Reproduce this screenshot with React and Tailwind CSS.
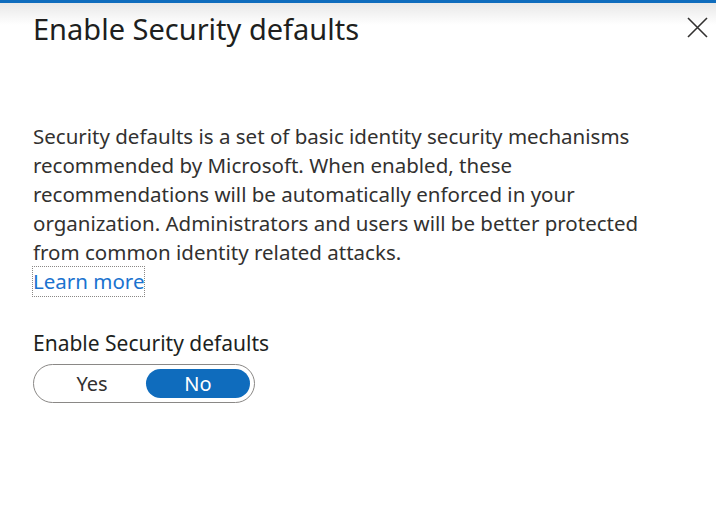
const lines = [
  'Security defaults is a set of basic identity security mechanisms',
  'recommended by Microsoft. When enabled, these',
  'recommendations will be automatically enforced in your',
  'organization. Administrators and users will be better protected',
  'from common identity related attacks.',
];

export default function App() {
  return (
    <div className="flex h-[505px] w-[716px] flex-col overflow-hidden bg-white text-[#323130] [font-family:'Noto_Sans','Open_Sans',sans-serif]">
      <div className="h-[3px] bg-[#0f6cbd]" />
      <div className="bg-[linear-gradient(#e8e8e8,#ffffff_22px)]">
        <div className="flex items-start justify-between pl-[33px] pr-[8px] pt-[6px]">
          <h1 className="text-[29px] leading-[40px] text-[#201f1e]">Enable Security defaults</h1>
          {/* close glyph */}
          <button className="mt-[8px] text-[#323130]">
            <svg width="21" height="21" viewBox="0 0 21 21" fill="none" stroke="currentColor" strokeWidth="1.6">
              <path d="M1 1L20 20M20 1L1 20" />
            </svg>
          </button>
        </div>
      </div>

      <div className="mt-[73px] pl-[33px] text-[20.5px] leading-[29px]">
        {lines.map((l) => (
          <p key={l}>{l}</p>
        ))}
        <a href="#" className="inline-block outline-1 outline-dotted outline-[#8a8886] text-[#1a73cf]">
          Learn more
        </a>
      </div>

      <div className="mt-[33px] pl-[33px]">
        <p className="text-[21px] leading-[28px] text-[#201f1e]">Enable Security defaults</p>
        <div className="mt-[7px] flex h-[39px] w-[222px] items-center rounded-full border-[1.5px] border-[#8a8886] p-[4px] text-[20px]">
          <span className="flex-1 text-center text-[#323130]">Yes</span>
          <span className="flex h-[29px] w-[104px] items-center justify-center rounded-full bg-[#0f6cbd] text-white">
            No
          </span>
        </div>
      </div>
    </div>
  );
}
